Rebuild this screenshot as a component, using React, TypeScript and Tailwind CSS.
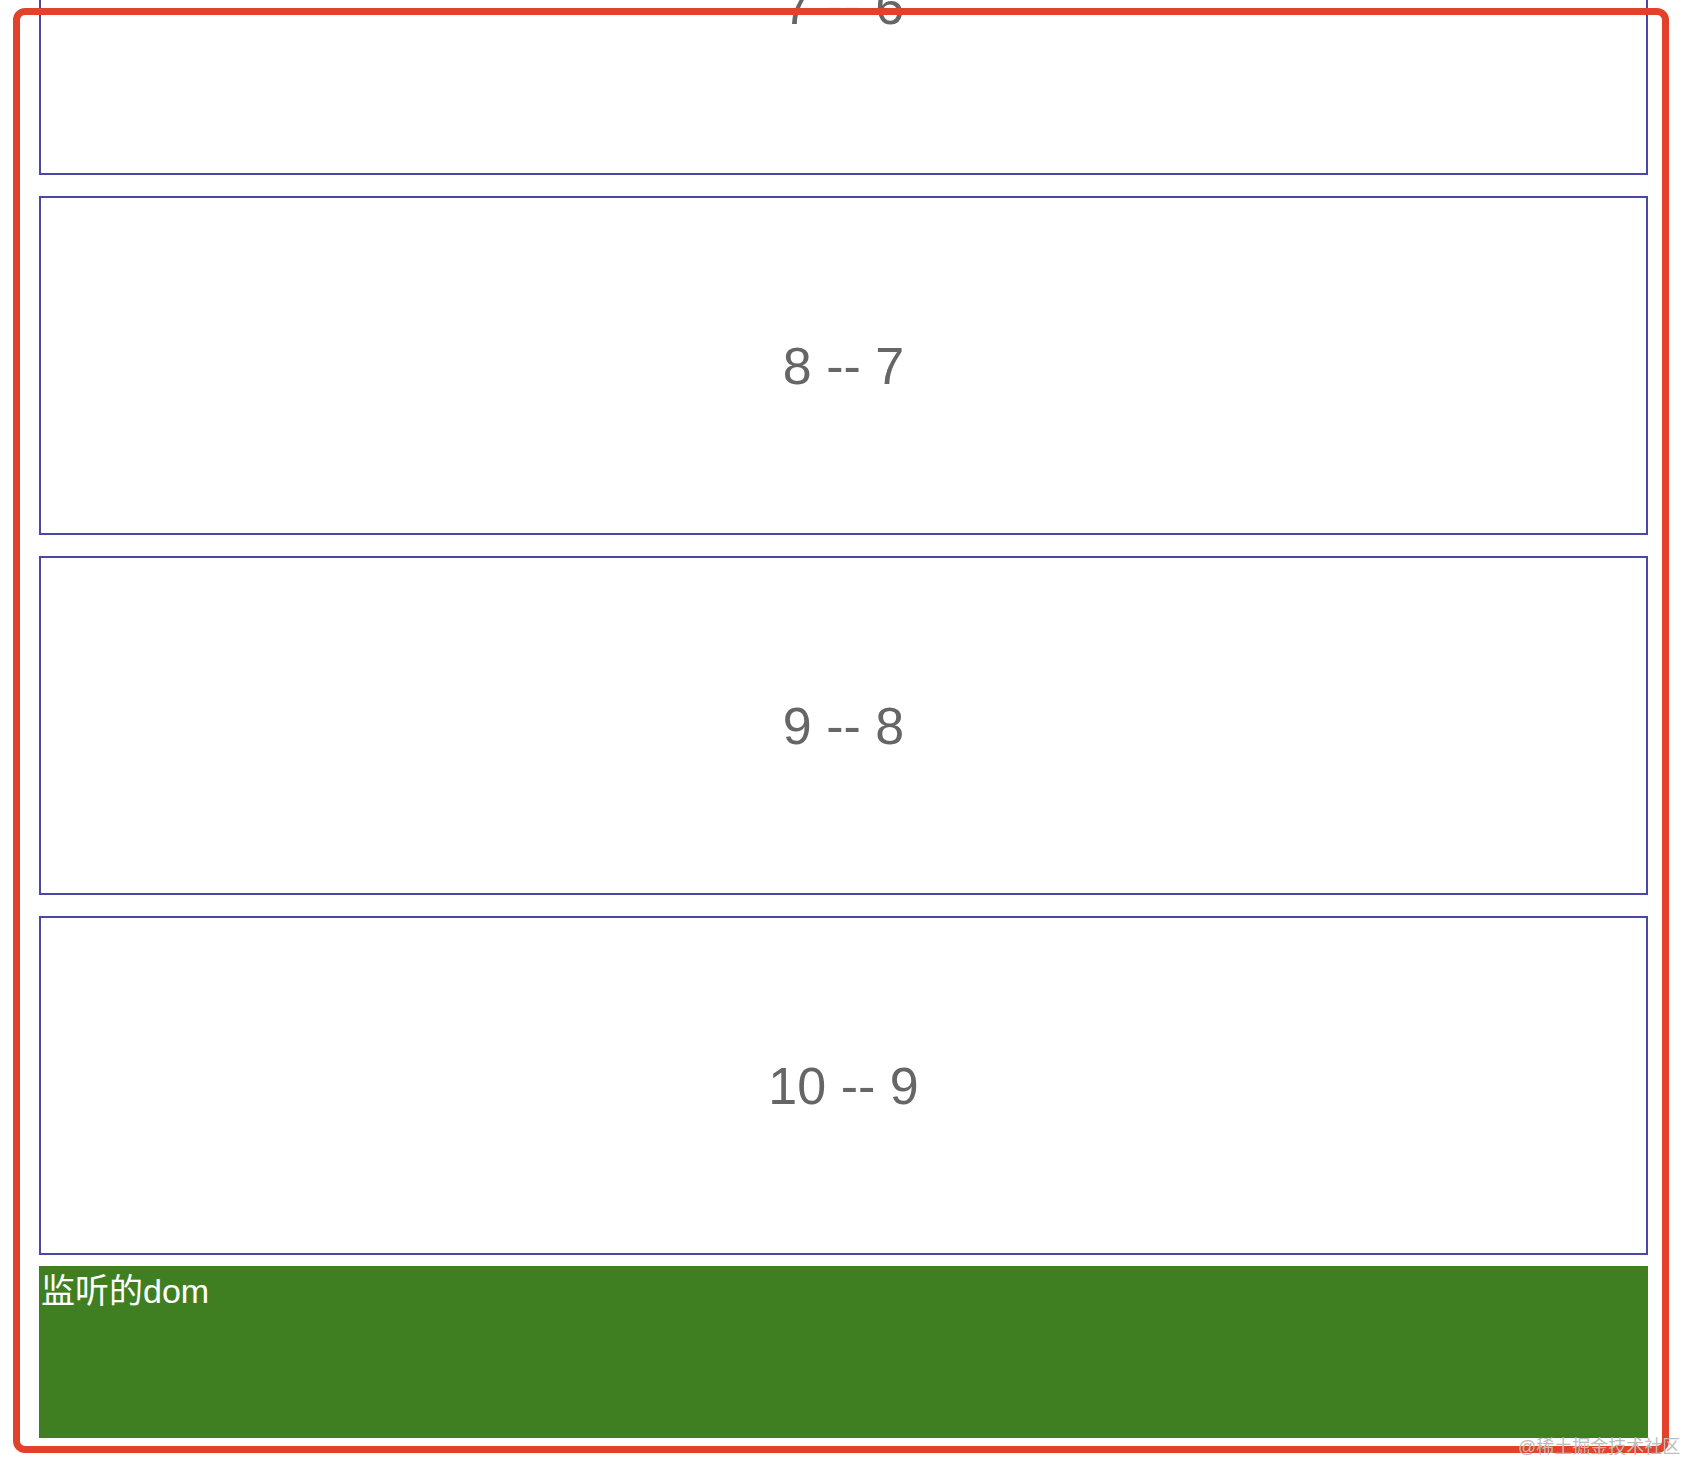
import React from "react";

const items = [
  [7, 6],
  [8, 7],
  [9, 8],
  [10, 9],
];

export default function App() {
  return (
    <div
      className="relative w-[1684px] h-[1464px] overflow-hidden bg-white"
      style={{ fontFamily: '"Liberation Sans", Arial, "Noto Sans CJK SC", sans-serif' }}
    >
      <div className="mt-[-164px] ml-[39px] w-[1609px] flex flex-col">
        <div className="flex flex-col gap-[21px]">
          {items.map(([a, b]) => (
            <div
              key={a}
              className="h-[339px] border-2 border-[#4a48a6] flex items-center justify-center text-[52px] text-[#666666]"
            >
              {a} -- {b}
            </div>
          ))}
        </div>
        <div className="mt-[11px] h-[172px] bg-[#3f7f22] text-white text-[34px] leading-[1.4] pl-[2px] pt-[2px]">
          监听的dom
        </div>
      </div>
      <div className="absolute left-[13px] top-[8px] w-[1656px] h-[1445px] border-[7px] border-[#e4412a] rounded-[12px] pointer-events-none" />
      <div className="absolute left-[1518px] top-[1434px] text-[18px] text-[#bdbdbd] whitespace-nowrap">
        @稀土掘金技术社区
      </div>
    </div>
  );
}
